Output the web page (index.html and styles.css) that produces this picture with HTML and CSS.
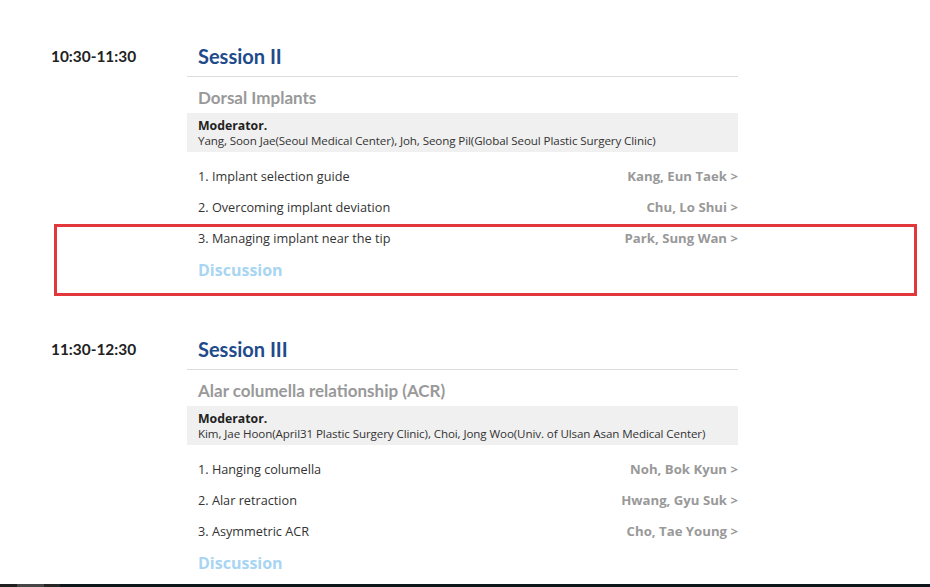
FILE: index.html
```html
<!DOCTYPE html>
<html>
<head>
<meta charset="utf-8">
<link rel="stylesheet" href="styles.css">
</head>
<body>
<div class="page">
  <section class="session">
    <div class="time">10:30-11:30</div>
    <div class="content">
      <h2 class="title">Session II</h2>
      <h3 class="subtitle">Dorsal Implants</h3>
      <div class="moderator">
        <div class="mod-label">Moderator.</div>
        <div class="mod-names">Yang, Soon Jae(Seoul Medical Center), Joh, Seong Pil(Global Seoul Plastic Surgery Clinic)</div>
      </div>
      <ul class="talks">
        <li class="talk"><span class="topic">1. Implant selection guide</span><span class="speaker">Kang, Eun Taek &gt;</span></li>
        <li class="talk"><span class="topic">2. Overcoming implant deviation</span><span class="speaker">Chu, Lo Shui &gt;</span></li>
        <li class="talk"><span class="topic">3. Managing implant near the tip</span><span class="speaker">Park, Sung Wan &gt;</span></li>
      </ul>
      <div class="discussion">Discussion</div>
    </div>
  </section>
  <section class="session">
    <div class="time">11:30-12:30</div>
    <div class="content">
      <h2 class="title">Session III</h2>
      <h3 class="subtitle">Alar columella relationship (ACR)</h3>
      <div class="moderator">
        <div class="mod-label">Moderator.</div>
        <div class="mod-names">Kim, Jae Hoon(April31 Plastic Surgery Clinic), Choi, Jong Woo(Univ. of Ulsan Asan Medical Center)</div>
      </div>
      <ul class="talks">
        <li class="talk"><span class="topic">1. Hanging columella</span><span class="speaker">Noh, Bok Kyun &gt;</span></li>
        <li class="talk"><span class="topic">2. Alar retraction</span><span class="speaker">Hwang, Gyu Suk &gt;</span></li>
        <li class="talk"><span class="topic">3. Asymmetric ACR</span><span class="speaker">Cho, Tae Young &gt;</span></li>
      </ul>
      <div class="discussion">Discussion</div>
    </div>
  </section>
  <div class="highlight"></div>
</div>
<div class="bottom-bar"><span class="seg seg1"></span><span class="seg seg2"></span><span class="seg seg3"></span></div>
</body>
</html>
```
FILE: styles.css
```css
* { box-sizing: border-box; }
html, body { margin: 0; padding: 0; background: #fff; }
body { font-family: "Open Sans", "Noto Sans", sans-serif; color: #333; }
.page { position: relative; width: 930px; }
.session { display: flex; padding-top: 40px; margin-bottom: 6px; }
.time {
  width: 187px; padding-left: 51px;
  font-family: Lato, sans-serif; font-weight: 700; font-size: 15.4px;
  line-height: 32px; color: #222;
}
.content { width: 551px; }
.title {
  margin: 0; padding: 0 11px 4px; line-height: 32px;
  font-family: Lato, sans-serif; font-weight: 700; font-size: 20px;
  color: #214a8b; border-bottom: 1px solid #dddddd;
}
.subtitle {
  margin: 8px 0 0; padding: 0 11px; line-height: 25px;
  font-family: Lato, sans-serif; font-weight: 700; font-size: 17px; color: #999;
}
.moderator {
  margin-top: 3px; background: #f0f0f0; padding: 5px 11px 4px; height: 39px;
}
.mod-label { font-weight: 700; font-size: 12.3px; line-height: 15px; color: #222; }
.mod-names { font-size: 11.6px; line-height: 16px; color: #333; letter-spacing: -0.1px; }
.talks { list-style: none; margin: 8px 0 0; padding: 0; }
.talk {
  display: flex; justify-content: space-between; align-items: center;
  height: 31px; padding-left: 11px; font-size: 12.7px;
}
.topic { color: #333; }
.speaker { font-weight: 700; color: #999; font-size: 13.2px; }
.discussion {
  padding-left: 11px; line-height: 34px;
  font-weight: 700; font-size: 16px; color: #a8d5f2;
}
.highlight {
  position: absolute; left: 54px; top: 224px; width: 863px; height: 72px;
  border: 3px solid #e2383c;
}
.bottom-bar {
  position: fixed; left: 0; bottom: 0; width: 100%; height: 3px;
  background: #0c161b; display: flex;
}
.seg { display: block; height: 3px; }
.seg1 { width: 17px; background: #1f1f1f; }
.seg2 { width: 27px; background: #454545; }
.seg3 { width: 16px; background: #262626; }
```
